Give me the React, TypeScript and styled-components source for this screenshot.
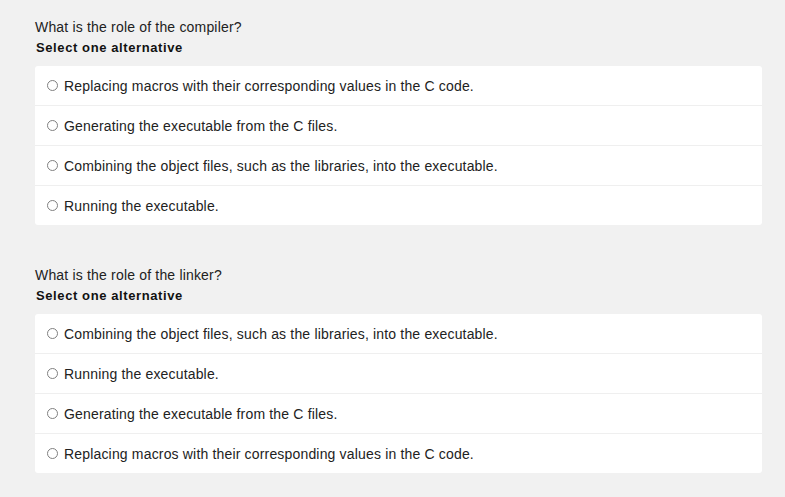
import React from "react";
import styled, { createGlobalStyle } from "styled-components";

const Global = createGlobalStyle`
  html, body { margin: 0; padding: 0; background: #f1f1f1; }
  body { font-family: "Liberation Sans", Arial, sans-serif; color: #222; }
`;

const Page = styled.div`
  padding: 19px 23px 24px 35px;
  display: flex;
  flex-direction: column;
  gap: 42px;
`;

const Block = styled.section`
  display: flex;
  flex-direction: column;
`;

const Question = styled.div`
  font-size: 14px;
  line-height: 16px;
  letter-spacing: 0.18px;
  color: #222;
`;

const Instruction = styled.div`
  margin-top: 5px;
  padding-left: 1px;
  font-size: 13px;
  line-height: 16px;
  letter-spacing: 0.6px;
  font-weight: bold;
  color: #111;
`;

const Card = styled.div`
  margin-top: 10px;
  background: #fff;
  border-radius: 3px;
  display: flex;
  flex-direction: column;
`;

const Row = styled.label`
  height: 39px;
  display: flex;
  align-items: center;
  gap: 6px;
  padding-left: 12px;
  font-size: 14px;
  letter-spacing: 0.17px;
  color: #222;
  border-bottom: 1px solid #efefef;
  &:last-child { border-bottom: none; }
`;

const Radio = styled.span`
  width: 11px;
  height: 11px;
  box-sizing: border-box;
  border-radius: 50%;
  border: 1px solid #808080;
  background: #fff;
  flex: none;
`;

const questions = [
  {
    q: "What is the role of the compiler?",
    options: [
      "Replacing macros with their corresponding values in the C code.",
      "Generating the executable from the C files.",
      "Combining the object files, such as the libraries, into the executable.",
      "Running the executable.",
    ],
  },
  {
    q: "What is the role of the linker?",
    options: [
      "Combining the object files, such as the libraries, into the executable.",
      "Running the executable.",
      "Generating the executable from the C files.",
      "Replacing macros with their corresponding values in the C code.",
    ],
  },
];

export default function App() {
  return (
    <>
      <Global />
      <Page>
        {questions.map((item) => (
          <Block key={item.q}>
            <Question>{item.q}</Question>
            <Instruction>Select one alternative</Instruction>
            <Card>
              {item.options.map((o) => (
                <Row key={o}>
                  <Radio />
                  {o}
                </Row>
              ))}
            </Card>
          </Block>
        ))}
      </Page>
    </>
  );
}
